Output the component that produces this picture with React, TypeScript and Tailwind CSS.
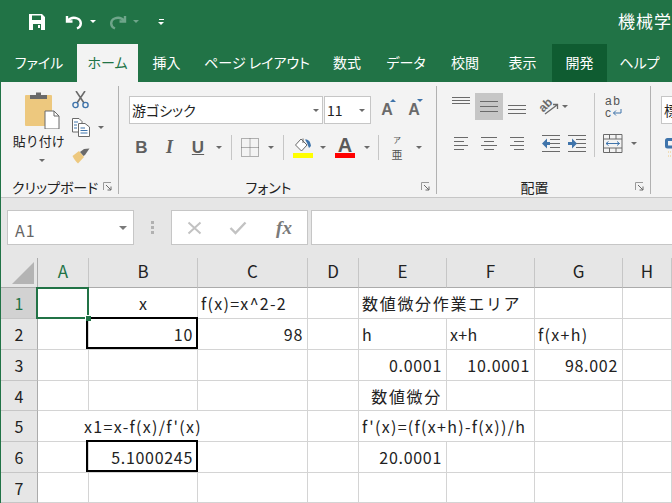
import React from "react";

const tabs = [
  { label: "ファイル", w: "w-[76px]", cls: "text-white" },
  { label: "ホーム", w: "w-[61px]", cls: "bg-[#f3f3f3] text-[#217346]" },
  { label: "挿入", w: "w-[57px]", cls: "text-white" },
  { label: "ページ レイアウト", w: "w-[124px]", cls: "text-white" },
  { label: "数式", w: "w-[56px]", cls: "text-white" },
  { label: "データ", w: "w-[62px]", cls: "text-white" },
  { label: "校閲", w: "w-[56px]", cls: "text-white" },
  { label: "表示", w: "w-[59px]", cls: "text-white" },
  { label: "開発", w: "w-[55px]", cls: "bg-[#0f5c31] text-white" },
  { label: "ヘルプ", w: "w-[65px]", cls: "text-white" },
];

const rowHeights = ["h-[31px]", "h-[31px]", "h-[31px]", "h-[30px]", "h-[31px]", "h-[31px]", "h-[30px]"];
const colHeads = [
  { label: "A", cls: "bg-[#d2d2d2] text-[#217346]" },
  { label: "B", cls: "" },
  { label: "C", cls: "" },
  { label: "D", cls: "" },
  { label: "E", cls: "" },
  { label: "F", cls: "" },
  { label: "G", cls: "" },
  { label: "H", cls: "" },
];

// over: text runs into the next cell, so that cell's gridline is hidden
type Cell = { t?: string; a?: "l" | "r" | "c"; tr?: string; box?: boolean; sel?: boolean; over?: boolean };

const NUM = "tracking-[0.7px]";
const FORMULA = "tracking-[1.3px]";
const CJK = "tracking-[1.7px]";

const sheet: Cell[][] = [
  [{ sel: true }, { t: "x", a: "c" }, { t: "f(x)=x^2-2", a: "l", tr: FORMULA }, {}, { t: "数値微分作業エリア", a: "l", tr: CJK, over: true }, {}, {}, {}],
  [{}, { t: "10", a: "r", tr: NUM, box: true }, { t: "98", a: "r", tr: NUM }, {}, { t: "h", a: "l" }, { t: "x+h", a: "l", tr: "tracking-[0.3px]" }, { t: "f(x+h)", a: "l", tr: FORMULA }, {}],
  [{}, {}, {}, {}, { t: "0.0001", a: "r", tr: NUM }, { t: "10.0001", a: "r", tr: NUM }, { t: "98.002", a: "r", tr: NUM }, {}],
  [{}, {}, {}, {}, { t: "数値微分", a: "r", tr: CJK }, {}, {}, {}],
  [{ over: true }, { t: "x1=x-f(x)/f'(x)", a: "c", tr: FORMULA, over: true }, {}, {}, { t: "f'(x)=(f(x+h)-f(x))/h", a: "l", tr: FORMULA, over: true }, {}, {}, {}],
  [{}, { t: "5.1000245", a: "r", tr: NUM, box: true }, {}, {}, { t: "20.0001", a: "r", tr: NUM }, {}, {}, {}],
  [{}, {}, {}, {}, {}, {}, {}, {}],
];

function Caret({ cls = "border-t-[#6a6a6a]" }: { cls?: string }) {
  return <span className={`block w-0 h-0 border-x-[3px] border-x-transparent border-t-[3px] ${cls}`} />;
}

function Slot({ w, children, cls = "" }: { w: string; children?: React.ReactNode; cls?: string }) {
  return <div className={`${w} h-full flex items-center justify-center shrink-0 ${cls}`}>{children}</div>;
}

function Launcher() {
  return (
    <svg className="absolute right-[5px] bottom-[2px]" width="10" height="10" viewBox="0 0 10 10" fill="none">
      <path d="M0.5 8V0.5H8" stroke="#9a9a9a" />
      <path d="M3 3L8 8M8 4.5V8H4.5" stroke="#6a6a6a" />
    </svg>
  );
}

function Lines({ widths, align = "center", w = 18, gap = 4, color = "#6a6a6a" }: { widths: number[]; align?: "left" | "center" | "right"; w?: number; gap?: number; color?: string }) {
  return (
    <svg width={w} height={(widths.length - 1) * gap + 1} viewBox={`0 0 ${w} ${(widths.length - 1) * gap + 1}`}>
      {widths.map((lw, i) => {
        const x = align === "left" ? 0 : align === "right" ? w - lw : (w - lw) / 2;
        return <rect key={i} x={x} y={i * gap} width={lw} height="1" fill={color} />;
      })}
    </svg>
  );
}

function Indent({ flip }: { flip?: boolean }) {
  return (
    <svg width="18" height="17" viewBox="0 0 18 17">
      {[0, 4, 8, 12, 16].map((y) => (
        <rect key={y} x={y === 0 || y === 16 ? 0 : 8} y={y} width={y === 0 || y === 16 ? 18 : 10} height="1" fill="#6a6a6a" />
      ))}
      {flip ? (
        <path d="M0 7H4V3.5L9 8.5L4 13.5V10H0Z" fill="#3f74ab" />
      ) : (
        <path d="M8 7H5V3.5L0 8.5L5 13.5V10H8Z" fill="#3f74ab" />
      )}
    </svg>
  );
}

export default function App() {
  return (
    <div className="w-[672px] h-[503px] overflow-hidden bg-white flex flex-col font-['Noto_Sans_CJK_JP',sans-serif] text-[#222222]">
      {/* title bar */}
      <div className="h-[44px] bg-[#217346] flex items-center shrink-0 pl-[29px] relative overflow-hidden">
        <svg width="16" height="16" viewBox="0 0 16 16">
          <path fillRule="evenodd" d="M0 0H13L16 3V16H0ZM3 1.5V6H12V1.5ZM4 10V16H12V10Z" fill="#fff" />
          <rect x="9" y="11" width="2" height="3" fill="#fff" />
        </svg>
        <svg className="ml-[20px]" width="19" height="16" viewBox="0 0 19 16" fill="none">
          <path d="M2 2V7.5H7.5" stroke="#fff" strokeWidth="2.4" />
          <path d="M2.5 7C5 4 9 3.2 12.5 4.5C17 6.5 17 12.5 12 14.5" stroke="#fff" strokeWidth="2.4" />
        </svg>
        <Caret cls="border-t-white ml-[6px] -mt-[2px]" />
        <svg className="ml-[12px]" width="19" height="16" viewBox="0 0 19 16" fill="none">
          <path d="M17 2V7.5H11.5" stroke="#6fa58a" strokeWidth="2.4" />
          <path d="M16.5 7C14 4 10 3.2 6.5 4.5C2 6.5 2 12.5 7 14.5" stroke="#6fa58a" strokeWidth="2.4" />
        </svg>
        <Caret cls="border-t-[#6fa58a] ml-[6px] -mt-[2px]" />
        <div className="ml-[19px] flex flex-col items-center gap-[2px]">
          <span className="block w-[5px] h-px bg-white" />
          <Caret cls="border-t-white" />
        </div>
        <span className="absolute left-[618px] top-[10px] text-[17px] tracking-[1px] leading-[22px] text-white whitespace-nowrap">機械学習</span>
      </div>

      {/* tabs */}
      <div className="h-[38px] bg-[#217346] flex items-stretch shrink-0 pl-px">
        {tabs.map((tab) => (
          <div key={tab.label} className={`${tab.w} ${tab.cls} shrink-0 flex items-center justify-center pb-px text-[14px] [font-feature-settings:'palt'] whitespace-nowrap`}>
            {tab.label}
          </div>
        ))}
      </div>

      <div className="flex-1 flex flex-col min-h-0 border-l border-[#217346]">
        {/* ribbon */}
        <div className="h-[116px] shrink-0 flex bg-[#f3f3f3] border-b border-[#c6c6c6] pt-[4px] pb-[3px]">
          {/* clipboard */}
          <div className="w-[118px] shrink-0 border-r border-[#b1b1b1] relative flex flex-col">
            <div className="flex-1 flex">
              <div className="w-[70px] flex flex-col items-center pt-[5px]">
                <svg className="ml-[14px]" width="36" height="38" viewBox="0 0 36 38">
                  <rect x="0" y="4" width="27" height="31" rx="1" fill="#edc87e" />
                  <path d="M5 8V4H11V1.5H16V4H22V8Z" fill="#6a6a6a" />
                  <path d="M20 20H29L34 25V38H20Z" fill="#fff" stroke="#6a6a6a" />
                  <path d="M29 20V25H34" fill="none" stroke="#6a6a6a" />
                </svg>
                <span className="text-[13px] leading-[18px] mt-[3px] ml-[6px] whitespace-nowrap">貼り付け</span>
                <Caret cls="border-t-[#6a6a6a] mt-[9px] ml-[12px]" />
              </div>
              <div className="w-[48px] relative">
                <svg className="ml-[2px] mt-[5px]" width="17" height="18" viewBox="0 0 17 18" fill="none">
                  <path d="M4 0L12 12M13 0L5 12" stroke="#6a6a6a" strokeWidth="1.6" />
                  <circle cx="3.5" cy="14" r="2.6" stroke="#3f74ab" strokeWidth="1.4" />
                  <circle cx="13.5" cy="14" r="2.6" stroke="#3f74ab" strokeWidth="1.4" />
                </svg>
                <div className="flex items-center mt-[9px] ml-[2px]">
                  <svg width="18" height="19" viewBox="0 0 18 19">
                    <path d="M0.5 0.5H7L10 3.5V14H0.5Z" fill="#fff" stroke="#6a6a6a" />
                    <path d="M6.5 5.5H13L17.5 9V18.5H6.5Z" fill="#fff" stroke="#6a6a6a" />
                    <path d="M2 4H6M2 7H5M2 10H5M8.5 10H13M8.5 12.5H15.5M8.5 15H15.5" stroke="#3f74ab" />
                  </svg>
                  <Caret cls="border-t-[#6a6a6a] ml-[8px]" />
                </div>
                <svg className="ml-[2px] mt-[11px]" width="18" height="16" viewBox="0 0 18 16">
                  <path d="M0.5 8L7 3L12 9L6 15.5C4 14 2 11 0.5 8Z" fill="#edc87e" />
                  <path d="M8 4L12 1L17.5 0.5L13 7L11.5 8Z" fill="#6a6a6a" />
                </svg>
              </div>
            </div>
            <div className="h-[14px] flex items-center pl-[11px] text-[14px] leading-[14px] [font-feature-settings:'palt'] whitespace-nowrap">クリップボード</div>
            <Launcher />
          </div>

          {/* font */}
          <div className="w-[318px] shrink-0 border-r border-[#b1b1b1] relative flex flex-col pl-[10px] pt-[10px]">
            <div className="flex items-center h-[28px]">
              <div className="w-[194px] h-full bg-white border border-[#c6c6c6] flex items-center justify-between pl-[2px] pr-[3px] text-[14px]">
                <span className="[font-feature-settings:'palt']">游ゴシック</span>
                <Caret />
              </div>
              <div className="w-[47px] ml-px h-full bg-white border border-[#c6c6c6] flex items-center justify-between pl-[2px] pr-[5px] text-[14px]">
                <span>11</span>
                <Caret />
              </div>
              <div className="ml-[9px] w-[14px] relative text-[16px] leading-none text-[#6a6a6a] flex justify-center font-['Liberation_Sans',sans-serif] font-bold">
                A<span className="absolute -right-[2px] -top-[3px] w-0 h-0 border-x-[3px] border-x-transparent border-b-[3px] border-b-[#3f74ab]" />
              </div>
              <div className="ml-[13px] w-[14px] relative text-[16px] leading-none text-[#6a6a6a] flex justify-center font-['Liberation_Sans',sans-serif] font-bold">
                A<span className="absolute -right-[2px] -top-[3px] w-0 h-0 border-x-[3px] border-x-transparent border-t-[3px] border-t-[#3f74ab]" />
              </div>
            </div>
            <div className="flex items-stretch h-[25px] mt-[11px] -ml-px text-[#5f5f5f] font-['Liberation_Sans',sans-serif]">
              <Slot w="w-[27px]"><span className="text-[17px] font-bold">B</span></Slot>
              <Slot w="w-[29px]"><span className="text-[18px] font-bold italic font-['Liberation_Serif',serif]">I</span></Slot>
              <Slot w="w-[28px]"><span className="text-[17px] font-bold underline">U</span></Slot>
              <Slot w="w-[14px]"><Caret /></Slot>
              <Slot w="w-[5px]" />
              <div className="w-px bg-[#c6c6c6]" />
              <Slot w="w-[35px]">
                <svg width="18" height="19" viewBox="0 0 18 19" fill="none">
                  <path d="M0.5 0.5H17.5V18.5H0.5ZM9 0.5V18.5M0.5 9.5H17.5" stroke="#6a6a6a" strokeDasharray="1 1" />
                </svg>
              </Slot>
              <Slot w="w-[8px]"><Caret /></Slot>
              <Slot w="w-[8px]" />
              <div className="w-px bg-[#c6c6c6]" />
              <Slot w="w-[35px]" cls="pl-[3px] flex-col">
                <svg width="18" height="15" viewBox="0 0 18 15" fill="none">
                  <path d="M7 1L13 7L7.5 13L1.5 7Z" fill="#fff" stroke="#6a6a6a" />
                  <path d="M9 0.5V5" stroke="#6a6a6a" />
                  <path d="M11 1.5C14 1 16.5 3 17 8L15 10L13 5Z" fill="#3f74ab" />
                </svg>
                <span className="block w-[20px] h-[5px] bg-[#ffff00]" />
              </Slot>
              <Slot w="w-[8px]"><Caret /></Slot>
              <Slot w="w-[36px]" cls="flex-col">
                <span className="text-[20px] leading-[16px] font-bold text-[#5a5a5a]">A</span>
                <span className="block w-[20px] h-[5px] bg-[#ff0000]" />
              </Slot>
              <Slot w="w-[7px]"><Caret /></Slot>
              <Slot w="w-[8px]" />
              <div className="w-px bg-[#c6c6c6]" />
              <Slot w="w-[36px]" cls="flex-col font-['Noto_Sans_CJK_JP',sans-serif]">
                <span className="text-[8px] leading-[12px] text-[#555555]">ア</span>
                <span className="text-[11px] leading-[16px] text-[#555555]">亜</span>
              </Slot>
              <Slot w="w-[7px]"><Caret /></Slot>
            </div>
            <div className="mt-auto h-[14px] -ml-[10px] flex items-center justify-center pr-[18px] text-[14px] leading-[14px] [font-feature-settings:'palt']">フォント</div>
            <Launcher />
          </div>

          {/* alignment */}
          <div className="w-[214px] shrink-0 border-r border-[#b1b1b1] relative flex flex-col">
            <div className="flex h-[71px] pl-[10px] pt-[7px]">
              <div className="w-[147px] flex flex-col shrink-0">
                <div className="flex h-[27px] items-stretch">
                  <Slot w="w-[28px]" cls="!items-start pt-[4px]"><Lines widths={[18, 18, 18]} gap={3} w={18} /></Slot>
                  <Slot w="w-[28px]" cls="bg-[#c6c6c6]"><Lines widths={[18, 18, 18]} gap={5} w={18} /></Slot>
                  <Slot w="w-[28px]" cls="!items-end pb-[6px]"><Lines widths={[18, 18, 18]} gap={4} w={18} /></Slot>
                  <Slot w="w-[29px]" cls="pl-[7px]">
                    <div className="relative w-[22px] h-[20px]">
                      <span className="absolute left-0 top-[1px] w-[15px] text-center text-[12px] leading-[14px] font-bold text-[#6a6a6a] -rotate-45 font-['Liberation_Sans',sans-serif]">ab</span>
                      <svg className="absolute inset-0" width="22" height="20" viewBox="0 0 22 20" fill="none">
                        <path d="M7 17L19 8M15 7.5H19.5V12" stroke="#6a6a6a" strokeWidth="1.3" />
                      </svg>
                    </div>
                  </Slot>
                  <Slot w="w-[10px]"><Caret /></Slot>
                </div>
                <div className="flex h-[25px] mt-[11px] items-stretch">
                  <Slot w="w-[28px]"><Lines widths={[14, 10, 14, 10]} align="left" w={14} /></Slot>
                  <Slot w="w-[28px]"><Lines widths={[16, 10, 16, 10]} w={16} /></Slot>
                  <Slot w="w-[28px]"><Lines widths={[14, 10, 14, 10]} align="right" w={14} /></Slot>
                  <Slot w="w-[32px]" cls="pl-[8px]"><Indent /></Slot>
                  <Slot w="w-[27px]"><Indent flip /></Slot>
                </div>
              </div>
              <div className="w-px bg-[#c6c6c6] shrink-0" />
              <div className="flex-1 flex flex-col">
                <div className="h-[27px] flex items-center pl-[10px]">
                  <div className="flex flex-col font-['Liberation_Sans',sans-serif] text-[12px] leading-[12px] text-[#555555] w-[18px]">
                    <span className="tracking-[1.5px]">ab</span>
                    <span className="flex items-center">
                      c
                      <svg className="ml-[1px]" width="10" height="8" viewBox="0 0 10 8" fill="none">
                        <path d="M9 0V4H1.5M4 1.5L1.5 4L4 6.5" stroke="#3f74ab" />
                      </svg>
                    </span>
                  </div>
                </div>
                <div className="h-[25px] mt-[11px] flex items-center pl-[8px]">
                  <svg width="20" height="19" viewBox="0 0 20 19" fill="none">
                    <path d="M0.5 0.5H19V18.5H0.5ZM0.5 5H19M0.5 14H19M6.5 0.5V5M13 0.5V5M6.5 14V18.5M13 14V18.5" stroke="#6a6a6a" />
                    <path d="M3 9.5H16.5M5.5 7.5L3 9.5L5.5 11.5M14 7.5L16.5 9.5L14 11.5" stroke="#3f74ab" />
                  </svg>
                  <Caret cls="border-t-[#6a6a6a] ml-[8px]" />
                </div>
              </div>
            </div>
            <div className="mt-auto h-[14px] flex items-center justify-center text-[14px] leading-[14px] pr-[18px]">配置</div>
            <Launcher />
          </div>

          {/* next group, cut off by the window */}
          <div className="flex-1 overflow-hidden pl-[10px] pt-[10px]">
            <div className="w-[40px] h-[28px] bg-white border border-[#c6c6c6] pl-[2px] flex items-center text-[14px]">標</div>
            <svg className="mt-[14px] ml-[4px]" width="8" height="20" viewBox="0 0 8 20" fill="none">
              <path d="M8 1.5H2.5C2 1.5 1.5 2 1.5 2.5V8C1.5 8.500 2 9 2.5 9H8" stroke="#3f74ab" strokeWidth="3" />
              <path d="M3 14H8M3 18H8" stroke="#edc87e" strokeDasharray="1 1" />
            </svg>
          </div>
        </div>

        {/* formula bar */}
        <div className="h-[60px] shrink-0 bg-[#e6e6e6] flex items-start pt-[12px] pl-[6px]">
          <div className="w-[127px] h-[35px] bg-white border border-[#c6c6c6] flex items-center justify-between pl-[7px] pr-[6px] text-[16px] text-[#666666]">
            <span className="pt-[4px] tracking-[1px]">A1</span>
            <Caret cls="border-t-[#7a7a7a] !border-x-[4px] !border-t-[4px]" />
          </div>
          <div className="w-[37px] h-[35px] flex flex-col items-center justify-center gap-[2px] shrink-0">
            <span className="block w-[3px] h-[3px] bg-[#b1b1b1]" />
            <span className="block w-[3px] h-[3px] bg-[#b1b1b1]" />
            <span className="block w-[3px] h-[3px] bg-[#b1b1b1]" />
          </div>
          <div className="w-[137px] h-[35px] bg-white border border-[#c6c6c6] flex items-center shrink-0">
            <Slot w="w-[42px]" cls="pl-[2px]">
              <svg width="15" height="14" viewBox="0 0 15 14" fill="none">
                <path d="M1.5 1.5L13.5 12.5M13.5 1.5L1.5 12.5" stroke="#c2c2c2" strokeWidth="2" />
              </svg>
            </Slot>
            <Slot w="w-[48px]">
              <svg width="18" height="14" viewBox="0 0 18 14" fill="none">
                <path d="M1.5 7L6.5 12L16.5 1.5" stroke="#c2c2c2" strokeWidth="2.4" />
              </svg>
            </Slot>
            <Slot w="w-[44px]">
              <span className="font-['Liberation_Serif',serif] italic font-bold text-[19px] leading-none text-[#7a7a7a]">fx</span>
            </Slot>
          </div>
          <div className="ml-[3px] flex-1 h-[35px] bg-white border-y border-l border-[#c6c6c6]" />
        </div>

        {/* sheet */}
        <div className="flex-1 min-h-0 grid grid-cols-[37px_51px_109px_110px_51px_88px_88px_88px_49px] content-start text-[16px]">
          <div className="h-[30px] bg-[#e6e6e6] border-r border-b border-[#ababab] flex items-end justify-end">
            <span className="block w-0 h-0 mr-[3px] mb-[3px] border-l-[22px] border-l-transparent border-b-[22px] border-b-[#b4b4b4]" />
          </div>
          {colHeads.map((c) => (
            <div key={c.label} className={`h-[30px] bg-[#e6e6e6] border-b border-r border-b-[#ababab] border-r-[#c6c6c6] flex items-center justify-center pb-[3px] text-[17px] ${c.cls}`}>
              {c.label}
            </div>
          ))}
          {sheet.map((row, r) => (
            <React.Fragment key={r}>
              <div className={`${rowHeights[r]} border-r border-b border-r-[#ababab] border-b-[#c6c6c6] flex items-center justify-center ${r === 0 ? "bg-[#d2d2d2] text-[#217346]" : "bg-[#e6e6e6]"}`}>
                {r + 1}
              </div>
              {row.map((cell, c) => (
                <div
                  key={c}
                  className={`${rowHeights[r]} relative border-b border-b-[#d4d4d4] flex items-center whitespace-nowrap ${cell.over ? "pr-px" : "border-r border-r-[#d4d4d4]"} ${
                    cell.a === "r" ? "justify-end pr-[4px]" : cell.a === "c" ? "justify-center" : "pl-[3px]"
                  }`}
                >
                  <span className={`relative z-10 ${cell.a === "l" ? "" : "shrink-0"} ${cell.tr ?? ""}`}>{cell.t}</span>
                  {cell.box && <div className="absolute -left-[3px] -top-[2px] right-[-1px] bottom-0 border-2 border-black z-20" />}
                  {cell.sel && (
                    <div className="absolute -left-[2px] -top-[1px] -right-px -bottom-px border-2 border-[#217346] z-30">
                      <span className="absolute -right-[4px] -bottom-[4px] w-[5px] h-[5px] bg-[#217346] border-t border-l border-white box-content" />
                    </div>
                  )}
                </div>
              ))}
            </React.Fragment>
          ))}
        </div>
      </div>
    </div>
  );
}
